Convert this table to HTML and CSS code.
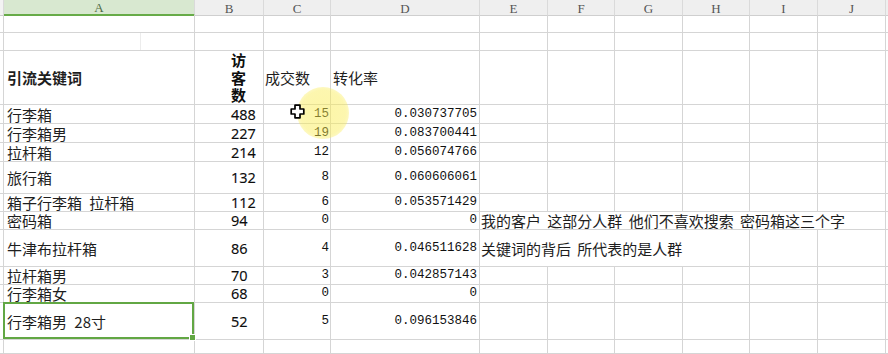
FILE: index.html
```html
<!DOCTYPE html>
<html lang="zh">
<head>
<meta charset="utf-8">
<link rel="stylesheet" href="styles.css">
</head>
<body>
<div class="sheet">
  <div class="row hd">
    <div class="corner"></div>
    <div class="col sel">A</div>
    <div class="col">B</div>
    <div class="col">C</div>
    <div class="col">D</div>
    <div class="col">E</div>
    <div class="col">F</div>
    <div class="col">G</div>
    <div class="col">H</div>
    <div class="col">I</div>
    <div class="col">J</div>
    <div class="col"></div>
  </div>
  <div class="row h18"><div></div><div></div><div></div><div></div><div></div><div></div><div></div><div></div><div></div><div></div><div></div><div></div></div>
  <div class="row h18"><div></div><div class="ghost"></div><div></div><div></div><div></div><div></div><div></div><div></div><div></div><div></div><div></div><div></div></div>
  <div class="row h54">
    <div></div>
    <div class="a"><b>引流关键词</b></div>
    <div class="b"><span class="stack">访客数</span></div>
    <div class="c left">成交数</div>
    <div class="d left">转化率</div>
    <div></div><div></div><div></div><div></div><div></div><div></div><div></div>
  </div>
  <div class="row h19">
    <div></div><div class="a">行李箱</div><div class="b">488</div><div class="c">15</div><div class="d">0.030737705</div>
    <div></div><div></div><div></div><div></div><div></div><div></div><div></div>
  </div>
  <div class="row h19">
    <div></div><div class="a">行李箱男</div><div class="b">227</div><div class="c">19</div><div class="d">0.083700441</div>
    <div></div><div></div><div></div><div></div><div></div><div></div><div></div>
  </div>
  <div class="row h19">
    <div></div><div class="a">拉杆箱</div><div class="b">214</div><div class="c">12</div><div class="d">0.056074766</div>
    <div></div><div></div><div></div><div></div><div></div><div></div><div></div>
  </div>
  <div class="row h32">
    <div></div><div class="a">旅行箱</div><div class="b">132</div><div class="c">8</div><div class="d">0.060606061</div>
    <div></div><div></div><div></div><div></div><div></div><div></div><div></div>
  </div>
  <div class="row h18">
    <div></div><div class="a">箱子行李箱 拉杆箱</div><div class="b">112</div><div class="c">6</div><div class="d">0.053571429</div>
    <div></div><div></div><div></div><div></div><div></div><div></div><div></div>
  </div>
  <div class="row h18">
    <div></div><div class="a">密码箱</div><div class="b">94</div><div class="c">0</div><div class="d">0</div>
    <div class="note span6">我的客户 这部分人群 他们不喜欢搜索 密码箱这三个字</div><div></div>
  </div>
  <div class="row h37">
    <div></div><div class="a">牛津布拉杆箱</div><div class="b">86</div><div class="c">4</div><div class="d">0.046511628</div>
    <div class="note span4">关键词的背后 所代表的是人群</div><div></div><div></div><div></div>
  </div>
  <div class="row h18">
    <div></div><div class="a">拉杆箱男</div><div class="b">70</div><div class="c">3</div><div class="d">0.042857143</div>
    <div></div><div></div><div></div><div></div><div></div><div></div><div></div>
  </div>
  <div class="row h18">
    <div></div><div class="a">行李箱女</div><div class="b">68</div><div class="c">0</div><div class="d">0</div>
    <div></div><div></div><div></div><div></div><div></div><div></div><div></div>
  </div>
  <div class="row h37">
    <div></div><div class="a active">行李箱男 28寸</div><div class="b">52</div><div class="c">5</div><div class="d">0.096153846</div>
    <div></div><div></div><div></div><div></div><div></div><div></div><div></div>
  </div>
  <div class="row hlast"><div></div><div></div><div></div><div></div><div></div><div></div><div></div><div></div><div></div><div></div><div></div><div></div></div>
</div>
<div class="spot"></div>
<svg class="cursor" width="15" height="15" viewBox="0 0 15 15" aria-hidden="true">
  <path d="M5 1.2 H10 V5 H13.8 V10 H10 V13.8 H5 V10 H1.2 V5 H5 Z" fill="#fff" stroke="#000" stroke-width="1.7" stroke-linejoin="round"/>
</svg>
</body>
</html>
```
FILE: styles.css
```css
* { box-sizing: border-box; margin: 0; padding: 0; }

html, body { background: #fff; }

body {
  width: 888px;
  height: 354px;
  overflow: hidden;
  position: relative;
  font-family: "Noto Sans CJK SC", "Noto Sans", sans-serif;
  color: #1e1e1e;
}

.sheet { display: flex; flex-direction: column; }

.row {
  display: grid;
  grid-template-columns: 4px 191px 69px 67px 149px 68px 67px 68px 67px 68px 68px 2px;
}

.row > div {
  border-right: 1px solid #d5d5d5;
  border-bottom: 1px solid #d5d5d5;
  display: flex;
  align-items: center;
  white-space: nowrap;
  font-size: 15px;
  line-height: 15px;
  min-width: 0;
}

.row > div:last-child { border-right: none; }

.hd { height: 15px; }
.h18 { height: 18px; }
.h19 { height: 19px; }
.h32 { height: 32px; }
.h37 { height: 37px; }
.h54 { height: 54px; }
.hlast { height: 14px; }

.hd > div {
  background: #efefef;
  border-right-color: #dadada;
  border-bottom-color: #cfcfcf;
  justify-content: center;
  font-family: "Liberation Serif", serif;
  font-size: 13px;
  color: #555;
  line-height: 1;
  padding-top: 1px;
}

.hd > .corner { background: #f3f3f3; }

.hd > .sel {
  background: #d8e8d0;
  border-bottom: 2px solid #67ab48;
  color: #4d6a44;
}

.a { padding-left: 3px; word-spacing: 4px; }

.a b { font-weight: 700; }

.b {
  padding-left: 36px;
  font-family: "Noto Sans", sans-serif;
  font-size: 14.5px !important;
  font-weight: 400;
  color: #0d0d0d;
  -webkit-text-stroke: 0.1px #0d0d0d;
}

.stack {
  display: block;
  width: 16px;
  white-space: normal;
  word-break: break-all;
  font-family: "Noto Sans CJK SC", sans-serif;
  font-size: 15px;
  font-weight: 700;
  line-height: 17.5px;
  -webkit-text-stroke: 0;
}

.c {
  justify-content: flex-end;
  padding-right: 1px;
  font-family: "Liberation Mono", monospace;
  font-size: 12.5px !important;
  color: #111;
}

.d {
  justify-content: flex-end;
  padding-right: 2px;
  font-family: "Liberation Mono", monospace;
  font-size: 12.5px !important;
  color: #111;
}

.c.left, .d.left {
  justify-content: flex-start;
  font-family: "Noto Sans CJK SC", sans-serif;
  font-size: 15px !important;
  color: #1e1e1e;
}

.c.left { padding-left: 1px; }
.d.left { padding-left: 2px; }

.note {
  padding-left: 1px;
  word-spacing: 3px;
}

.span6 { grid-column: span 6; }
.span4 { grid-column: span 4; }

.ghost {
  background: linear-gradient(to right, transparent 136px, #ececec 136px, #ececec 137px, transparent 137px);
}

.active { position: relative; }

.active::after {
  content: "";
  position: absolute;
  left: -1px;
  top: -1px;
  right: 0;
  bottom: 0;
  border: 2px solid #62a744;
}

.active::before {
  content: "";
  position: absolute;
  right: -2px;
  bottom: -2px;
  width: 5px;
  height: 5px;
  background: #62a744;
  border: 1px solid #fff;
  z-index: 2;
}

.spot {
  position: absolute;
  left: 297px;
  top: 87px;
  width: 52px;
  height: 52px;
  border-radius: 50%;
  background: radial-gradient(circle, rgba(250, 236, 80, 0.5) 0%, rgba(250, 236, 80, 0.46) 62%, rgba(250, 236, 80, 0) 100%);
}

.cursor {
  position: absolute;
  left: 290px;
  top: 104px;
}
```
